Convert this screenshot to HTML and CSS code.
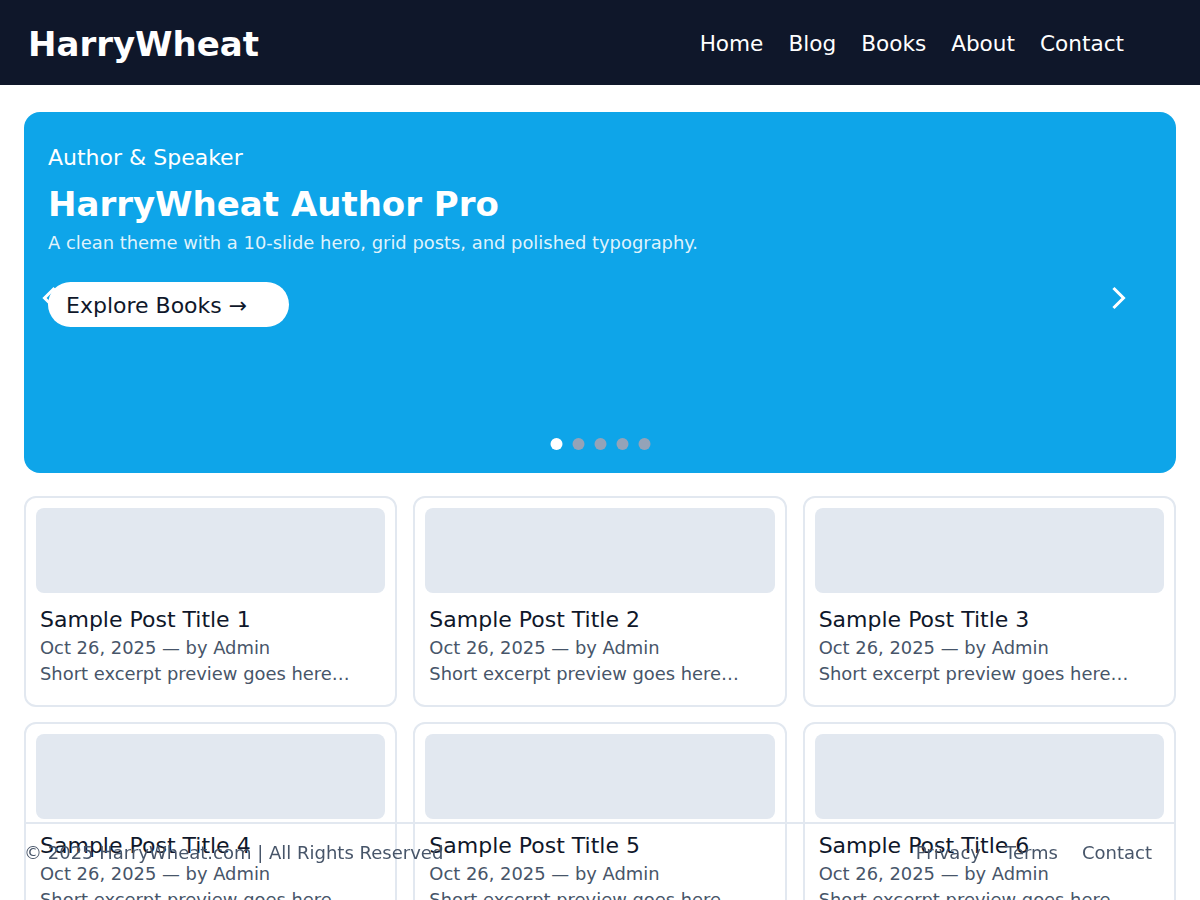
FILE: index.html
```html
<!DOCTYPE html>
<html lang="en">
<head>
<meta charset="utf-8">
<title>HarryWheat</title>
<link rel="stylesheet" href="styles.css">
</head>
<body>
<header class="site-header">
  <a class="logo" href="#">HarryWheat</a>
  <nav class="main-nav">
    <a href="#">Home</a>
    <a href="#">Blog</a>
    <a href="#">Books</a>
    <a href="#">About</a>
    <a href="#">Contact</a>
  </nav>
</header>

<main class="container">
  <section class="hero">
    <button class="hero-arrow prev" aria-label="Previous">
      <svg width="36" height="36" viewBox="0 0 36 36"><polyline points="22.5,9 13.5,18 22.5,27" fill="none" stroke="#fff" stroke-width="3" stroke-linecap="square"/></svg>
    </button>
    <button class="hero-arrow next" aria-label="Next">
      <svg width="36" height="36" viewBox="0 0 36 36"><polyline points="13.5,9 22.5,18 13.5,27" fill="none" stroke="#fff" stroke-width="3" stroke-linecap="square"/></svg>
    </button>
    <div class="hero-content">
      <p class="hero-tag">Author &amp; Speaker</p>
      <h1 class="hero-title">HarryWheat Author Pro</h1>
      <p class="hero-sub">A clean theme with a 10-slide hero, grid posts, and polished typography.</p>
      <a class="hero-btn" href="#">Explore Books →</a>
    </div>
    <div class="hero-dots">
      <span class="dot active"></span>
      <span class="dot"></span>
      <span class="dot"></span>
      <span class="dot"></span>
      <span class="dot"></span>
    </div>
  </section>

  <section class="posts">
    <article class="card"><div class="card-img"></div><div class="card-body"><h3 class="card-title">Sample Post Title 1</h3><p class="card-meta">Oct 26, 2025 — by Admin</p><p class="card-excerpt">Short excerpt preview goes here…</p></div></article>
    <article class="card"><div class="card-img"></div><div class="card-body"><h3 class="card-title">Sample Post Title 2</h3><p class="card-meta">Oct 26, 2025 — by Admin</p><p class="card-excerpt">Short excerpt preview goes here…</p></div></article>
    <article class="card"><div class="card-img"></div><div class="card-body"><h3 class="card-title">Sample Post Title 3</h3><p class="card-meta">Oct 26, 2025 — by Admin</p><p class="card-excerpt">Short excerpt preview goes here…</p></div></article>
    <article class="card"><div class="card-img"></div><div class="card-body"><h3 class="card-title">Sample Post Title 4</h3><p class="card-meta">Oct 26, 2025 — by Admin</p><p class="card-excerpt">Short excerpt preview goes here…</p></div></article>
    <article class="card"><div class="card-img"></div><div class="card-body"><h3 class="card-title">Sample Post Title 5</h3><p class="card-meta">Oct 26, 2025 — by Admin</p><p class="card-excerpt">Short excerpt preview goes here…</p></div></article>
    <article class="card"><div class="card-img"></div><div class="card-body"><h3 class="card-title">Sample Post Title 6</h3><p class="card-meta">Oct 26, 2025 — by Admin</p><p class="card-excerpt">Short excerpt preview goes here…</p></div></article>
  </section>
</main>

<footer class="site-footer">
  <span class="copy">© 2025 HarryWheat.com | All Rights Reserved</span>
  <nav class="footer-nav">
    <a href="#">Privacy</a>
    <a href="#">Terms</a>
    <a href="#">Contact</a>
  </nav>
</footer>
</body>
</html>
```

FILE: styles.css
```css
* { box-sizing: border-box; }

html, body {
  margin: 0;
  padding: 0;
}

body {
  font-family: "DejaVu Sans", "Liberation Sans", sans-serif;
  background: #ffffff;
  color: #0f172a;
}

a { text-decoration: none; color: inherit; }

.site-header {
  height: 85px;
  background: #0f172a;
  display: flex;
  align-items: center;
  justify-content: space-between;
  padding: 0 76px 0 28px;
}

.logo {
  color: #ffffff;
  font-weight: 700;
  font-size: 34px;
  line-height: 40px;
  margin-top: 3px;
}

.main-nav {
  display: flex;
  gap: 25px;
  margin-top: 2px;
}

.main-nav a {
  color: #ffffff;
  font-size: 21.6px;
  line-height: 26px;
}

.container {
  padding: 27px 24px 0;
}

.hero {
  position: relative;
  height: 361px;
  background: #0ea5e9;
  border-radius: 16px;
  padding: 32px 24px 23px;
  display: flex;
  flex-direction: column;
  color: #ffffff;
}

.hero-content {
  display: flex;
  flex-direction: column;
  align-items: flex-start;
}

.hero-tag {
  margin: 0;
  font-size: 22px;
  line-height: 26px;
  padding-top: 1px;
}

.hero-title {
  margin: 13px 0 0;
  font-size: 34px;
  line-height: 40px;
  font-weight: 700;
}

.hero-sub {
  margin: 8px 0 0;
  font-size: 17.9px;
  line-height: 22px;
  color: rgba(255, 255, 255, 0.88);
}

.hero-btn {
  position: relative;
  z-index: 2;
  margin-top: 28px;
  background: #ffffff;
  color: #0f172a;
  font-size: 22px;
  line-height: 25px;
  padding: 11px 18px 9px;
  min-width: 241px;
  border-radius: 999px;
}

.hero-arrow {
  position: absolute;
  top: 168px;
  width: 36px;
  height: 36px;
  padding: 0;
  border: 0;
  background: transparent;
  z-index: 1;
  display: block;
}

.hero-arrow svg { display: block; }

.hero-arrow.prev { left: 7px; }
.hero-arrow.next { right: 39px; }

.hero-dots {
  margin-top: auto;
  align-self: center;
  display: flex;
  gap: 10px;
  transform: translateX(0.5px);
}

.dot {
  width: 12px;
  height: 12px;
  border-radius: 50%;
  background: #94a3b8;
}

.dot.active { background: #ffffff; }

.posts {
  margin-top: 23px;
  display: grid;
  grid-template-columns: repeat(3, 1fr);
  gap: 15px 16px;
}

.card {
  border: 2px solid #e2e8f0;
  border-radius: 12px;
  padding: 10px;
}

.card-img {
  height: 85px;
  background: #e2e8f0;
  border-radius: 8px;
}

.card-body {
  padding: 0 4px 8px;
}

.card-title {
  margin: 14px 0 0;
  font-size: 22px;
  line-height: 26px;
  font-weight: 400;
  color: #0f172a;
}

.card-meta,
.card-excerpt {
  margin: 0;
  font-size: 17.9px;
  line-height: 26px;
  color: #475569;
}

.card-meta { margin-top: 2px; }

.site-footer {
  position: fixed;
  left: 24px;
  right: 24px;
  bottom: 0;
  height: 78px;
  border-top: 2px solid #e2e8f0;
  padding: 18px 24px 0 0;
  display: flex;
  justify-content: space-between;
  align-items: flex-start;
  font-size: 18px;
  line-height: 22px;
  color: #475569;
}

.footer-nav {
  display: flex;
  gap: 24px;
}
```
